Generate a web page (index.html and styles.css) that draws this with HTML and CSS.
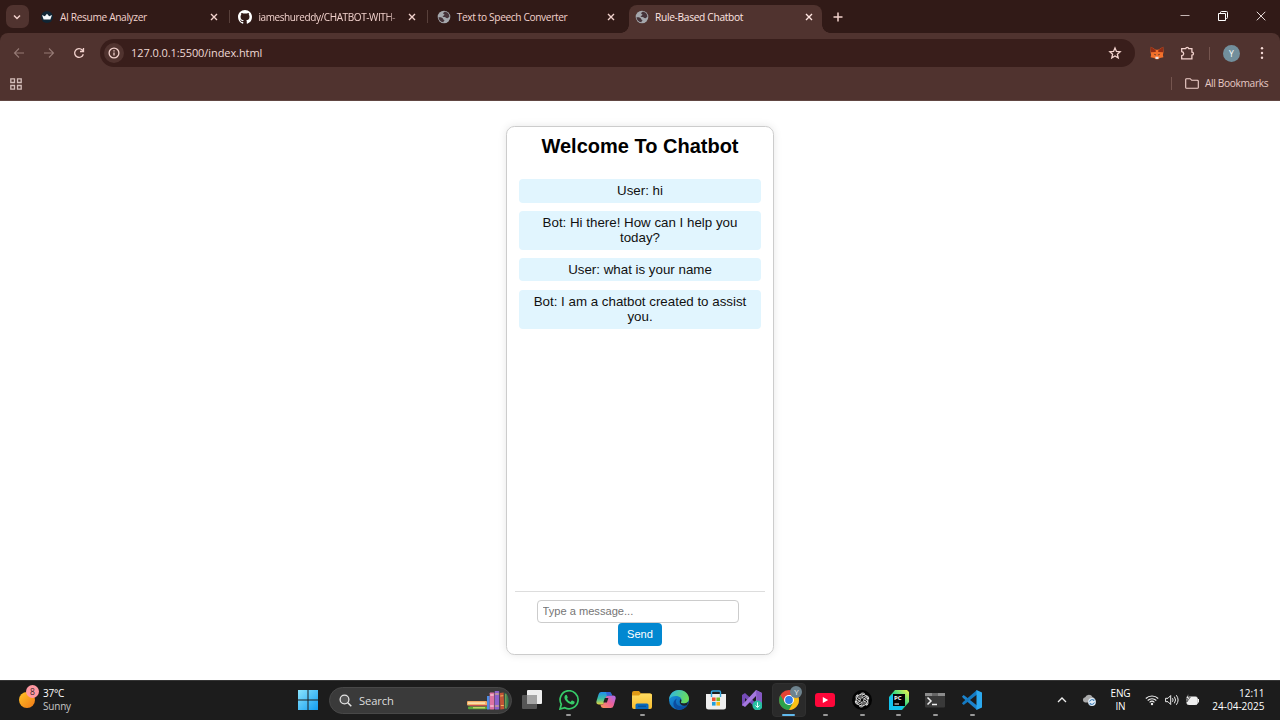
FILE: index.html
```html
<!DOCTYPE html>
<html lang="en">
<head>
<meta charset="utf-8">
<title>Rule-Based Chatbot</title>
<link rel="stylesheet" href="styles.css">
</head>
<body>
<svg class="defs" aria-hidden="true">
  <defs>
    <linearGradient id="win" x1="0" y1="0" x2="1" y2="1"><stop offset="0" stop-color="#8be4fd"/><stop offset="1" stop-color="#119cf0"/></linearGradient>
    <linearGradient id="edge1" x1="0" y1="0" x2="1" y2=".3"><stop offset="0" stop-color="#2bb3ee"/><stop offset="1" stop-color="#68dc5c"/></linearGradient>
    <linearGradient id="edge2" x1="0" y1="0" x2="1" y2="1"><stop offset="0" stop-color="#189ce6"/><stop offset="1" stop-color="#0a4fa0"/></linearGradient>
    <linearGradient id="cop1" x1="0" y1="0" x2="0" y2="1"><stop offset="0" stop-color="#208ef0"/><stop offset=".55" stop-color="#3bc0a0"/><stop offset="1" stop-color="#e8d33c"/></linearGradient>
    <linearGradient id="cop2" x1="1" y1="0" x2="0" y2="1"><stop offset="0" stop-color="#a56cf0"/><stop offset=".5" stop-color="#ee6196"/><stop offset="1" stop-color="#ff9a55"/></linearGradient>
    <linearGradient id="fold" x1="0" y1="0" x2="0" y2="1"><stop offset="0" stop-color="#ffdc62"/><stop offset="1" stop-color="#f8bc2d"/></linearGradient>
    <linearGradient id="pc" x1="0" y1="1" x2="1" y2="0"><stop offset="0" stop-color="#10c5f5"/><stop offset=".5" stop-color="#21d789"/><stop offset="1" stop-color="#fcf84a"/></linearGradient>
    <symbol id="close" viewBox="0 0 10 10"><path d="M2 2l6 6M8 2L2 8" stroke="currentColor" stroke-width="1.4" fill="none"/></symbol>
    <symbol id="globe" viewBox="0 0 14 14"><circle cx="7" cy="7" r="6.3" fill="#a5a8ad"/><path d="M7.300 1.900C5.600 2.600 6 4 7.300 4.200c.5.900-.6 1.500-1.600 1.700-.2.900.6 1 1.800 1.100 1.500.2 1.500 1.300 2.800 1.200.9-.2 1.500-1.400 2-1.300C12.500 3.900 10 1.600 7.300 1.900zM1.500 7.200c2.200-.2 4.400.1 4.600 1.700 0 .9 1.500.5 1.300 1.600-.3.800-1 .9-1.100 1.800C3.500 12 1.500 9.600 1.500 7.200z" fill="#46343a"/></symbol>
  </defs>
</svg>

<header class="tabstrip">
  <div class="tab-search"><svg viewBox="0 0 10 10" width="10" height="10"><path d="M2 3.500l3 3 3-3" class="line bold"/></svg></div>
  <div class="tab">
    <svg class="favicon" viewBox="0 0 14 14"><circle cx="7" cy="7" r="6" fill="#102635"/><path d="M2 5l2.800 1.200L7 3.800l2.200 2.400L12 5l-1.600 4.500H3.600z" fill="#f4f8fb"/></svg>
    <span class="tab-title t1">AI Resume Analyzer</span><svg class="close"><use href="#close"/></svg>
  </div>
  <div class="tab">
    <svg class="favicon" viewBox="0 0 16 16"><path fill="#fff" d="M8 0C3.580 0 0 3.580 0 8c0 3.540 2.290 6.530 5.470 7.590.4.070.55-.17.55-.38 0-.19-.01-.82-.01-1.490-2.010.37-2.530-.49-2.690-.94-.09-.23-.48-.94-.82-1.130-.28-.15-.68-.52-.01-.53.63-.01 1.080.58 1.230.82.72 1.210 1.870.87 2.330.66.070-.52.28-.87.51-1.070-1.780-.2-3.640-.89-3.640-3.950 0-.87.31-1.590.82-2.150-.08-.2-.36-1.020.08-2.120 0 0 .67-.21 2.200.82a7.600 7.600 0 014 0c1.530-1.040 2.200-.82 2.200-.82.44 1.100.16 1.920.08 2.120.51.56.82 1.270.82 2.150 0 3.070-1.870 3.750-3.650 3.950.29.25.54.73.54 1.480 0 1.070-.01 1.930-.01 2.200 0 .21.15.46.55.38A8 8 0 0016 8c0-4.420-3.580-8-8-8z"/></svg>
    <span class="tab-title t2 faded">iameshureddy/CHATBOT-WITH-</span><svg class="close"><use href="#close"/></svg>
  </div>
  <div class="tab before-active">
    <svg class="favicon"><use href="#globe"/></svg>
    <span class="tab-title t3">Text to Speech Converter</span><svg class="close"><use href="#close"/></svg>
  </div>
  <div class="tab active">
    <svg class="favicon"><use href="#globe"/></svg>
    <span class="tab-title t4">Rule-Based Chatbot</span><svg class="close"><use href="#close"/></svg>
  </div>
  <svg class="new-tab" viewBox="0 0 12 12"><path d="M6 1.500v9M1.500 6h9" class="line bold"/></svg>
  <div class="window-controls">
    <svg viewBox="0 0 12 12"><path d="M1.500 5.500h9" stroke="#c5b6b4" fill="none"/></svg>
    <svg viewBox="0 0 12 12"><path d="M1.500 3.500h7v7h-7zM3.500 3.200V2.500q0-1 1-1h5q1 0 1 1v5q0 1-1 1h-.7" stroke="#fff" fill="none"/></svg>
    <svg viewBox="0 0 12 12"><path d="M1.800 1.800l8.500 8.500M10.300 1.800l-8.500 8.500" stroke="#e9dedc" fill="none"/></svg>
  </div>
</header>

<div class="chrome">
  <div class="toolbar">
    <div class="nav">
      <svg viewBox="0 0 12 12" class="dim"><path d="M11 6H1.500M6 1.500L1.500 6 6 10.500" class="line"/></svg>
      <svg viewBox="0 0 12 12" class="dim"><path d="M1 6h9.500M6 1.500L10.500 6 6 10.500" class="line"/></svg>
      <svg viewBox="0 0 12 12"><path d="M10.300 7.200A4.400 4.400 0 1 1 9.300 3L10.500 4.300M10.500 1v3.500H7" class="line mid"/></svg>
    </div>
    <div class="address">
      <span class="site-info"><svg viewBox="0 0 12 12" width="12" height="12"><circle cx="6" cy="6" r="4.900" class="line mid"/><path d="M6 5.400v3.200M6 3.200v1.200" class="line mid"/></svg></span>
      <span class="url">127.0.0.1:5500/index.html</span>
      <svg class="star" viewBox="0 0 14 14"><path d="M7 2l1.450 3.400 3.700.35-2.800 2.450.85 3.600L7 9.900l-3.200 1.900.85-3.600-2.800-2.450 3.700-.35z" class="line mid"/></svg>
    </div>
    <div class="tools">
      <svg class="fox" viewBox="0 0 14 14"><path d="M.8.8l5 2.900h2.400l5-2.900.3 5-.6 3.200.5 2.200-3.600.8-1.500 1.200H5.700l-1.500-1.200-3.600-.8.500-2.200L.5 5.800z" fill="#f3702b"/><path d="M.8.8l4.800 3.100.2 2-5 .3zM13.200.8L8.400 3.900l-.2 2 5 .3z" fill="#902d16"/><path d="M3.800 7.700l2 .7-.4 1zM10.200 7.700l-2 .7.4 1z" fill="#29272b"/><path d="M5.300 10.700h3.400l-.4 2.300H5.700z" fill="#e9e5e9"/></svg>
      <svg class="puzzle" viewBox="0 0 15 15"><path d="M1.700 2.700h4q.2-1.300 1.500-1.300t1.500 1.300h3.200v3.500q1.600.1 1.600 1.500t-1.600 1.500v3.700H1.700V9.700q2-.3 2-2t-2-2z" class="line mid"/></svg>
      <i class="divider"></i>
      <span class="avatar">Y</span>
      <svg class="dots" viewBox="0 0 4 14"><g fill="#f4d9d5"><circle cx="2" cy="2.300" r="1.200"/><circle cx="2" cy="7" r="1.200"/><circle cx="2" cy="11.700" r="1.200"/></g></svg>
    </div>
  </div>
  <div class="bookmarks">
    <svg class="apps" viewBox="0 0 12 12"><path d="M.8.800h3.700v3.700H.8zM7.500.800h3.700v3.700H7.500zM.8 7.500h3.700v3.700H.8zM7.500 7.500h3.700v3.700H7.500z" stroke="#d3bdb9" stroke-width="1.300" fill="none"/></svg>
    <i class="divider"></i>
    <svg class="folder" viewBox="0 0 14 11"><path d="M1.600.7h3.600l1.500 1.600h5.700q.9 0 .9.900v6.200q0 .9-.9.900H1.600q-.9 0-.9-.9V1.600q0-.9.9-.9z" class="line"/></svg>
    <span class="all">All Bookmarks</span>
  </div>
</div>

<main class="page">
  <section class="chat">
    <h1>Welcome To Chatbot</h1>
    <div class="messages">
      <div class="message">User: hi</div>
      <div class="message">Bot: Hi there! How can I help you today?</div>
      <div class="message">User: what is your name</div>
      <div class="message">Bot: I am a chatbot created to assist you.</div>
    </div>
    <div class="composer">
      <input type="text" placeholder="Type a message...">
      <button>Send</button>
    </div>
  </section>
</main>

<footer class="taskbar">
  <div class="weather">
    <span class="sun"><span class="badge">8</span></span>
    <div><div class="temp">37°C</div><div class="sky">Sunny</div></div>
  </div>
  <svg class="start" viewBox="0 0 20 20"><path d="M0 0h9.500v9.500H0zM10.500 0H20v9.500h-9.500zM0 10.500h9.500V20H0zM10.500 10.500H20V20h-9.500z" fill="url(#win)"/></svg>
  <div class="search">
    <svg class="lens" viewBox="0 0 13 13"><circle cx="5.500" cy="5.500" r="4.400" fill="#555" stroke="#e4e4e4" stroke-width="1.300"/><path d="M8.800 8.800l3.500 3.500" stroke="#e4e4e4" stroke-width="1.500"/></svg>
    <span>Search</span>
    <svg class="books" viewBox="0 0 42 20"><rect y="11" width="20" height="4.500" rx="1" fill="#f4ad65"/><rect x="1" y="12.300" width="17" height="1.600" fill="#fae4b4"/><rect x="3" y="15" width="17" height="1.600" fill="#c04d54"/><rect x="1" y="16.600" width="19" height="2.700" rx="1" fill="#58a83a"/><rect x="6" y="17.200" width="12" height="1.100" fill="#d9df70"/><rect x="20" y="6" width="2.700" height="13.500" fill="#4e8de5"/><rect x="22.700" y="2.500" width="4.600" height="17" rx=".7" fill="#dd72a2"/><path d="M23.200 5h3.500M23.200 16h3.500" stroke="#f6c1d4" stroke-width="1.300"/><rect x="27.700" y="1" width="4.500" height="18.500" rx=".7" fill="#8c61cd"/><path d="M28.200 4h3.500M28.200 16h3.500" stroke="#ecc46c"/><path d="M32.800 3l3.800-.5.7 16.500-4 .5z" fill="#c15436"/><path d="M33.300 6l3-.3M33.800 15.500h3" stroke="#f3b45d"/><path d="M37.600 2.500q4 2 4 8.500 0 5-2 8h-2z" fill="#347e50"/><path d="M38.800 4v14" stroke="#a3af58" stroke-width=".8"/></svg>
  </div>
  <nav class="apps-row">
    <div class="app"><svg viewBox="0 0 20 20"><rect x="5" y="0" width="15" height="14" rx="1" fill="#eee"/><rect x="0" y="5" width="15" height="14" rx="1" fill="#555"/><path d="M5 5h10v9H5z" fill="#a4a4a4"/></svg></div>
    <div class="app open"><svg viewBox="0 0 20 20"><path d="M1 19l1.300-4.700a9 9 0 1 1 3.500 3.400z" fill="none" stroke="#36cb68" stroke-width="1.700"/><path d="M6.200 5.200q1.200-1 1.700.1l.8 1.900q.2.500-.7 1.500 1.200 2.300 3.500 3.200l1-1.200q.4-.4.900-.1l1.900 1q.7.400.1 1.600-.8 1.500-2.800 1.300-3.100-.4-5.600-3.500-2.700-3.400-.8-5.800z" fill="#36cb68"/></svg></div>
    <div class="app"><svg viewBox="0 0 20 20"><path d="M5 2h8q2 0 2.500 2l.5 1.500h-3.500q-1.500 0-2 1.500L8.200 13Q7.700 14.500 5.700 14.500H3q-3 0-2.600-3L2.500 4.500Q3 2 5 2z" fill="url(#cop1)"/><path d="M15.500 5.500H17q3 0 2.700 3l-2 7q-.7 2.500-3 2.500H7.300q-2 0-2.500-2l-.3-1.500H6q1.500 0 2-1.500l2-6q.5-1.500 2-1.500z" fill="url(#cop2)"/><path d="M10 2h3q2 0 2.500 2l.5 1.500h-3.500q-1 0-1.500.8z" fill="#3164d7"/><path d="M8.800 8h3.600l-1.500 4.500H7.300z" fill="#202020"/></svg></div>
    <div class="app open"><svg viewBox="0 0 20 20"><path d="M0 3q0-2 2-2h5l2 2.500h9q2 0 2 2V9H0z" fill="#e09a15"/><path d="M0 5.500h7L9 3.500h9q2 0 2 1.500v12q0 2-2 2H2q-2 0-2-2z" fill="url(#fold)"/><path d="M3.500 19v-4q0-1.500 1.500-1.500h10q1.500 0 1.500 1.500v4z" fill="#0969bd"/><path d="M6 16.200h8" stroke="#064987" stroke-width="1"/></svg></div>
    <div class="app"><svg viewBox="0 0 20 20"><circle cx="10" cy="10" r="10" fill="url(#edge2)"/><path d="M0 9.500C.6 3.800 4.800 0 10 0c6 0 10 4.300 10 8.500 0 3.300-2.500 5-5 5-2.700 0-3.700-1-2.800-2 .8-1.100.6-4-2.700-5C6 5.400 1.800 6.500 0 9.500z" fill="url(#edge1)"/><path d="M8 8.500c-2.500 3-.8 8 5 8 2 0 3.600-.4 5.200-1.500C15.600 20 9.600 21.200 6.200 18 3.200 15 4 10.500 8 8.500z" fill="#0b4da0"/><path d="M12.200 11.500c-.9 1 .1 2 2.800 2 1.500 0 3-.5 4-1.700l-.8 3.200c-2 1-4.500 1-6.200-.5-1.800-1.600-1.500-4-.4-5.500.7.800 1 1.800.6 2.500z" fill="#1e2023"/></svg></div>
    <div class="app"><svg viewBox="0 0 20 20"><path d="M0 4h20v13q0 2.500-2.500 2.500h-15Q0 19.500 0 17z" fill="#eee"/><path d="M5.500 7V2.200Q5.500 1 6.700 1h6.600q1.200 0 1.200 1.200V7" fill="none" stroke="#33a5de" stroke-width="1.400"/><path d="M6 7.500h3.600v3.600H6z" fill="#ef512c"/><path d="M10.400 7.500H14v3.600h-3.600z" fill="#7aba23"/><path d="M6 12h3.600v3.600H6z" fill="#209fde"/><path d="M10.400 12H14v3.600h-3.600z" fill="#f9b719"/></svg></div>
    <div class="app"><svg viewBox="0 0 20 20"><path d="M0 5l3-2 12 11v5L3 8v6l-3 2z" fill="#754bb7"/><path d="M0 15L14 0l6 3v14l-4 3-2-1V6L3 17z" fill="#a477df"/><path d="M14 0l6 3v14l-5 2z" fill="#8659c4"/><circle cx="15.500" cy="15.500" r="5" fill="#28bea2"/><path d="M15.500 12.300v5M13.500 15.500l2 2 2-2" fill="none" stroke="#e4fff8"/></svg></div>
    <div class="app open current"><svg viewBox="0 0 20 20"><circle cx="10" cy="10" r="10" fill="#e54335"/><path d="M1.340 5A10 10 0 0 0 10 20l4.300-7.500L10 10 5.700 12.500z" fill="#2ba24c"/><path d="M18.660 5A10 10 0 0 1 10 20l4.300-7.500L10 5z" fill="#fbc116"/><circle cx="10" cy="10" r="5" fill="#fff"/><circle cx="10" cy="10" r="3.900" fill="#347de8"/></svg><span class="profile">Y</span></div>
    <div class="app open"><svg viewBox="0 0 20 20"><rect y="3" width="20" height="14" rx="3" fill="#ff073a"/><path d="M7.800 7l5.400 3-5.400 3z" fill="#fff"/></svg></div>
    <div class="app open"><svg viewBox="0 0 20 20"><circle cx="10" cy="10" r="10" fill="#030303"/><g fill="none" stroke="#ddd" stroke-width=".9"><g id="petal"><path d="M8 8.800V5.700a2.700 2.700 0 0 1 4.600-1.900M12.600 3.800L9.900 5.400v3.400"/></g><use href="#petal" transform="rotate(60 10 10)"/><use href="#petal" transform="rotate(120 10 10)"/><use href="#petal" transform="rotate(180 10 10)"/><use href="#petal" transform="rotate(240 10 10)"/><use href="#petal" transform="rotate(300 10 10)"/><circle cx="10" cy="10" r="5.900"/></g></svg></div>
    <div class="app open"><svg viewBox="0 0 20 20"><path d="M6 0h12l2 2v10l-7 8H0V7z" fill="url(#pc)"/><path d="M0 8l4-4v12h11l-3 4H0z" fill="#13c2ee"/><rect x="4" y="4" width="12" height="12" fill="#050505"/><text x="5" y="9.800" class="pc-text">PC</text><path d="M5.500 14h4.500" stroke="#fff"/></svg></div>
    <div class="app open"><svg viewBox="0 0 20 20"><rect y="3" width="20" height="14.500" rx="1" fill="#393939"/><path d="M0 3h20v3H0z" fill="#8c8c8c"/><path d="M7 3h6v3H7z" fill="#666"/><path d="M2.500 7.500L6 11l-3.500 3.500M7 14.500h5" fill="none" stroke="#eee" stroke-width="1.500"/></svg></div>
    <div class="app open"><svg viewBox="0 0 20 20"><path d="M0 6.500L1.700 5 15 15.500V20L1 8z" fill="#1c83cc"/><path d="M0 13.500L1.700 15 15 4.500V0L1 12z" fill="#147ac2"/><path d="M14.500 0L20 2.500v15L14.500 20z" fill="#2ca9ef"/></svg></div>
  </nav>
  <div class="tray">
    <svg class="chevron" viewBox="0 0 10 8"><path d="M1 6l4-4 4 4" fill="none" stroke="#eee" stroke-width="1.300"/></svg>
    <svg class="cloud" viewBox="0 0 14 12"><path d="M3 8.500a2.700 2.700 0 0 1 .2-5.300A4 4 0 0 1 10.500 3a2.800 2.800 0 0 1 0 5.500z" fill="#aaa"/><circle cx="10" cy="8" r="3.900" fill="#e2eef9"/><path d="M7.700 7.500a2.500 2.500 0 0 1 4.300-1v-1M12.300 8.500a2.500 2.500 0 0 1-4.300 1v1" fill="none" stroke="#2269aa"/></svg>
    <div class="lang">ENG<br>IN</div>
    <svg class="wifi" viewBox="0 0 14 12"><g fill="none" stroke="#eee" stroke-width="1.100"><path d="M.8 4.500a8.800 8.800 0 0 1 12.400 0M2.700 6.500a6.100 6.100 0 0 1 8.600 0M4.600 8.400a3.400 3.400 0 0 1 4.800 0"/></g><circle cx="7" cy="10" r="1.200" fill="#eee"/></svg>
    <svg class="sound" viewBox="0 0 14 12"><path d="M.6 4.300H3L5.700 1.500v9L3 7.700H.6zM7.500 4.200q1.200 1.800 0 3.600M9.400 2.700q2.300 3.300 0 6.600M11.300 1.200q3.600 4.800 0 9.600" fill="none" stroke="#eee"/></svg>
    <svg class="battery" viewBox="0 0 14 12"><rect x="2" y="3" width="10.300" height="7.500" rx="1.500" fill="#eee" stroke="#eee"/><path d="M13.500 5v3.500" stroke="#eee"/><path d="M3.300 0L.7 4.500h2L1.800 8l3.500-4.800H3.400z" fill="#eee" stroke="#1c1c1c" stroke-width=".6"/></svg>
    <div class="clock">12:11<br><span>24-04-2025</span></div>
  </div>
</footer>
</body>
</html>
```
FILE: styles.css
```css
* { box-sizing: border-box; }
html, body { height: 100%; }
body { margin: 0; display: flex; flex-direction: column; overflow: hidden; background: #fff; font-family: "Open Sans", "Noto Sans", sans-serif; }
svg { display: block; flex: none; }
.defs { position: absolute; width: 0; height: 0; }
.line { fill: none; stroke: currentColor; stroke-width: 1.1; }
.line.mid { stroke-width: 1.3; }
.line.bold { stroke-width: 1.5; }

.tabstrip { height: 33px; flex: none; display: flex; position: relative; z-index: 1; background: #311a17; color: #f2d2cd; }
.tab-search { width: 23px; height: 23px; margin: 5px 3px 0 5.500px; border-radius: 7px; background: #50332f; display: grid; place-items: center; }
.tab { width: 198.400px; height: 28px; margin-top: 5px; padding: 0 11px 4px 8.500px; display: flex; align-items: center; position: relative; }
.tab:not(.active):not(.before-active)::after { content: ""; position: absolute; right: 0; top: 5px; width: 1px; height: 13px; background: #58403b; }
.tab.active { width: 193px; margin-left: 2.300px; padding-left: 6px; padding-right: 8px; border-radius: 8px 8px 0 0; background: #50332f; color: #ffe6e2; }
.tab.active::before, .tab.active::after { content: ""; position: absolute; bottom: 0; width: 8px; height: 8px; }
.tab.active::before { left: -8px; background: radial-gradient(circle at 0 0, transparent 7.5px, #50332f 8px); }
.tab.active::after { right: -8px; background: radial-gradient(circle at 100% 0, transparent 7.5px, #50332f 8px); }
.favicon { width: 14px; height: 14px; margin-right: 6px; }
.tab-title { flex: 1; min-width: 0; white-space: nowrap; font-size: 10.2px; line-height: 16px; }
.t1 { letter-spacing: -.37px; }
.t2 { font-size: 10px; letter-spacing: -.4px; }
.t3 { letter-spacing: -.38px; }
.t4 { letter-spacing: -.31px; }
.faded { mask-image: linear-gradient(90deg, #000 86%, rgba(0,0,0,.25) 95%); }
.close { width: 10px; height: 10px; }
.new-tab { width: 12px; height: 12px; margin: 11px 0 0 10.500px; }
.window-controls { margin: 10px 13px 0 auto; display: flex; gap: 26px; }
.window-controls svg { width: 12px; height: 12px; }

.chrome { height: 68px; flex: none; background: #50332f; border-radius: 8px 8px 0 0; box-shadow: 0 -8px 0 0 #311a17; border-bottom: 1px solid #614642; color: #f2d2cd; }
.toolbar { height: 40px; display: flex; align-items: center; }
.nav { display: flex; gap: 18px; margin-left: 12.500px; width: 87.500px; }
.nav svg { width: 12px; height: 12px; }
.dim { color: #967a75; }
.address { width: 1035px; height: 28px; border-radius: 14px; background: #391e1b; display: flex; align-items: center; padding: 0 13px 0 4px; }
.site-info { width: 20px; height: 20px; border-radius: 50%; background: #50332f; display: grid; place-items: center; }
.url { margin-left: 7px; flex: 1; padding-bottom: 1px; font-size: 11px; letter-spacing: -.08px; color: #eed9d5; }
.star { width: 14px; height: 14px; }
.tools { display: flex; align-items: center; margin-left: 15px; }
.fox { width: 14px; height: 14px; }
.puzzle { width: 15px; height: 15px; margin-left: 16px; }
.divider { width: 1px; height: 13px; background: #75554f; margin-left: 14px; }
.avatar { width: 17px; height: 17px; margin-left: 13px; border-radius: 50%; background: #728f9c; color: #fff; display: grid; place-items: center; font-size: 8.500px; }
.dots { width: 4px; height: 14px; margin-left: 20px; }
.bookmarks { height: 21px; display: flex; align-items: center; padding: 0 12px 0 10px; }
.apps { width: 12px; height: 12px; margin-right: auto; }
.folder { width: 14px; height: 11px; margin-left: 13px; }
.all { width: 63px; margin-left: 6px; padding-bottom: 1px; font-size: 10.2px; letter-spacing: -.36px; white-space: nowrap; color: #e6c9c4; }

.page { flex: 1; min-height: 0; display: flex; justify-content: center; padding-top: 25px; font-family: "Liberation Sans", Arial, sans-serif; }
.chat { width: 268px; height: 529px; border: 1px solid #ccc; border-radius: 8.300px; box-shadow: 0 0 8.300px rgba(0,0,0,.1); padding: 8.300px; text-align: center; display: flex; flex-direction: column; }
h1 { margin: 0; height: 35px; font-size: 20px; line-height: 23px; }
.messages { flex: 1; padding: 9px 4.200px 0; border-bottom: 1px solid #ddd; }
.message { background: #e1f5fe; border-radius: 4px; padding: 4px; margin-bottom: 8.500px; font-size: 13.333px; line-height: 15.300px; color: #111; }
.composer { display: flex; flex-direction: column; align-items: center; padding-top: 8.300px; }
.composer input { width: 202px; height: 23px; margin-right: 4px; padding: 0 4.500px 1.500px; border: 1px solid #ccc; border-radius: 4px; font: 11.111px "Liberation Sans", Arial, sans-serif; outline: 0; }
.composer input::placeholder { color: #757575; }
.composer button { width: 43.500px; height: 22.500px; padding: 0; border: 0; border-radius: 4px; background: #0288d1; color: #fff; font: 11.111px "Liberation Sans", Arial, sans-serif; }

.taskbar { height: 40px; flex: none; display: flex; align-items: center; padding-bottom: 1px; background: #1c1c1c; border-top: 1px solid #353535; color: #fff; font-size: 10px; }
.weather { width: 297.500px; padding-left: 19px; display: flex; align-items: center; }
.sun { width: 16px; height: 16px; margin-right: 8px; border-radius: 50%; background: linear-gradient(135deg, #ffc326, #f07817); position: relative; }
.badge { position: absolute; left: 7px; top: -7px; width: 13px; height: 13px; border-radius: 50%; background: #ff98a2; color: #38282b; font-size: 8.500px; line-height: 13px; text-align: center; }
.temp, .sky { line-height: 13.500px; letter-spacing: -.2px; }
.sky { color: #c5c5c5; }
.start { width: 20px; height: 20px; }
.search { width: 183px; height: 27px; margin-left: 11px; border: 1px solid #484848; border-radius: 14px; background: #3a3a3a; display: flex; align-items: center; padding-left: 9px; font-size: 11.200px; letter-spacing: -.1px; color: #ddd; }
.lens { width: 13px; height: 13px; margin-right: 7.500px; }
.books { width: 42px; height: 20px; margin-left: auto; margin-right: 2px; }
.apps-row { display: flex; margin-left: 2.500px; }
.app { width: 36.650px; height: 38px; display: grid; place-items: center; position: relative; }
.app > svg { width: 20px; height: 20px; }
.app.open::after { content: ""; position: absolute; left: 50%; bottom: 3px; width: 5px; height: 2px; border-radius: 1px; margin-left: -2.500px; background: #999; }
.app.current::before { content: ""; position: absolute; inset: 2px 1.500px 2px; border: 1px solid #303030; border-radius: 4px; background: #2a2a2a; }
.app.current > svg { position: relative; }
.app.current::after { width: 13px; margin-left: -6.500px; background: #61b9ec; }
.profile { position: absolute; left: 20px; top: 5px; width: 12px; height: 12px; border-radius: 50%; background: #6e838e; color: #eee; font-size: 8px; line-height: 12px; text-align: center; }
.pc-text { font: bold 6px "Open Sans", sans-serif; fill: #fff; }
.tray { margin-left: auto; display: flex; align-items: center; padding-right: 15.500px; }
.chevron { width: 10px; height: 8px; margin-right: 15px; }
.cloud { width: 14px; height: 12px; margin-right: 12px; }
.lang { width: 26px; text-align: center; line-height: 13.500px; letter-spacing: -.2px; }
.wifi { width: 14px; height: 12px; margin-left: 11px; }
.sound { width: 14px; height: 12px; margin-left: 6px; }
.battery { width: 14px; height: 12px; margin-left: 6px; }
.clock { width: 66px; text-align: right; line-height: 13.500px; letter-spacing: 0; }
```
